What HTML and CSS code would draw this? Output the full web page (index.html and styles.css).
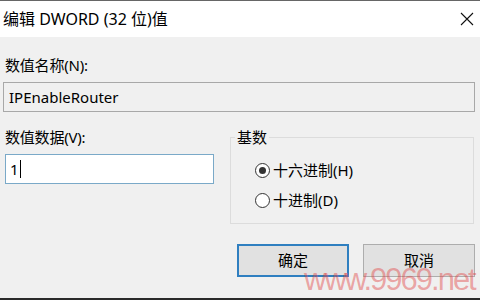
FILE: index.html
```html
<!DOCTYPE html>
<html>
<head>
<meta charset="utf-8">
<link rel="stylesheet" href="styles.css">
</head>
<body>
<div class="window">
  <div class="titlebar">
    <span class="title">编辑 DWORD (32 位)值</span>
    <svg class="close" width="14" height="14" viewBox="0 0 14 14"><path d="M1 1 L13 13 M13 1 L1 13" stroke="#111" stroke-width="1.1" fill="none"/></svg>
  </div>
  <div class="content">
    <div class="label first">数值名称(N):</div>
    <div class="namebox">IPEnableRouter</div>
    <div class="row">
      <div class="leftcol">
        <div class="label">数值数据(V):</div>
        <div class="databox"><span>1</span><span class="caret"></span></div>
      </div>
      <fieldset class="group">
        <legend>基数</legend>
        <div class="radio"><span class="dot checked"></span><span>十六进制(H)</span></div>
        <div class="radio"><span class="dot"></span><span>十进制(D)</span></div>
      </fieldset>
    </div>
    <div class="buttons">
      <div class="btn primary">确定</div>
      <div class="btn">取消</div>
    </div>
    <div class="watermark">www.9969.net</div>
  </div>
</div>
</body>
</html>
```

FILE: styles.css
```css
html, body {
  margin: 0;
  padding: 0;
}
body {
  width: 480px;
  height: 300px;
  overflow: hidden;
  font-family: "Noto Sans", "Noto Sans CJK SC", sans-serif;
  color: #000;
}
.window {
  width: 480px;
  height: 300px;
  display: flex;
  flex-direction: column;
  border-top: 1px solid #666;
  border-bottom: 2px solid #2a2a2a;
  box-sizing: border-box;
  background: #f0f0f0;
}
.titlebar {
  height: 36px;
  background: #fff;
  display: flex;
  align-items: center;
  justify-content: space-between;
  padding: 0 6px 0 3px;
  flex: none;
}
.title {
  font-size: 16px;
  line-height: 20px;
}
.content {
  flex: 1;
  position: relative;
  padding: 0 5px 0 3px;
  display: flex;
  flex-direction: column;
}
.label {
  font-size: 15px;
  line-height: 20px;
  padding-left: 2px;
  letter-spacing: -0.2px;
}
.label.first {
  margin-top: 18px;
}
.namebox {
  margin-top: 7px;
  height: 28px;
  border: 1px solid #a8a8a8;
  background: #f0f0f0;
  font-size: 15px;
  line-height: 28px;
  padding-left: 5px;
}
.row {
  display: flex;
  margin-top: 15px;
}
.leftcol {
  width: 211px;
  display: flex;
  flex-direction: column;
}
.databox {
  margin-top: 7px;
  margin-left: 2px;
  height: 28px;
  border: 1px solid #7aa9c8;
  background: #fff;
  font-size: 15px;
  line-height: 28px;
  padding-left: 4px;
  display: flex;
  align-items: center;
}
.caret {
  width: 1px;
  height: 18px;
  background: #000;
  margin-left: 1px;
}
.group {
  margin: 0 0 0 16px;
  padding: 8px 0 0 24px;
  width: 244px;
  height: 97px;
  box-sizing: border-box;
  border: 1px solid #dcdcdc;
  min-width: 0;
  flex: none;
}
.group legend {
  font-size: 15px;
  line-height: 20px;
  padding: 0 2px 0 2px;
  margin-left: -20px;
}
.radio {
  display: flex;
  align-items: center;
  font-size: 15px;
  line-height: 20px;
  height: 30px;
  gap: 3px;
}
.dot {
  width: 13px;
  height: 13px;
  border: 1px solid #333;
  border-radius: 50%;
  background: #fff;
  position: relative;
  flex: none;
}
.dot.checked::after {
  content: "";
  position: absolute;
  left: 3px;
  top: 3px;
  width: 7px;
  height: 7px;
  border-radius: 50%;
  background: #333;
}
.buttons {
  display: flex;
  justify-content: flex-end;
  gap: 14px;
  margin-top: 20px;
}
.btn {
  width: 110px;
  height: 31px;
  border: 1px solid #adadad;
  background: #e1e1e1;
  font-size: 15px;
  line-height: 31px;
  text-align: center;
}
.btn.primary {
  border: 2px solid #2f7fc0;
  width: 108px;
  height: 29px;
  line-height: 29px;
}
.watermark {
  position: absolute;
  left: 304px;
  top: 225px;
  font-family: "Liberation Sans", sans-serif;
  font-size: 31px;
  line-height: 36px;
  color: rgba(225, 70, 70, 0.45);
  white-space: nowrap;
  letter-spacing: -2px;
}
```
